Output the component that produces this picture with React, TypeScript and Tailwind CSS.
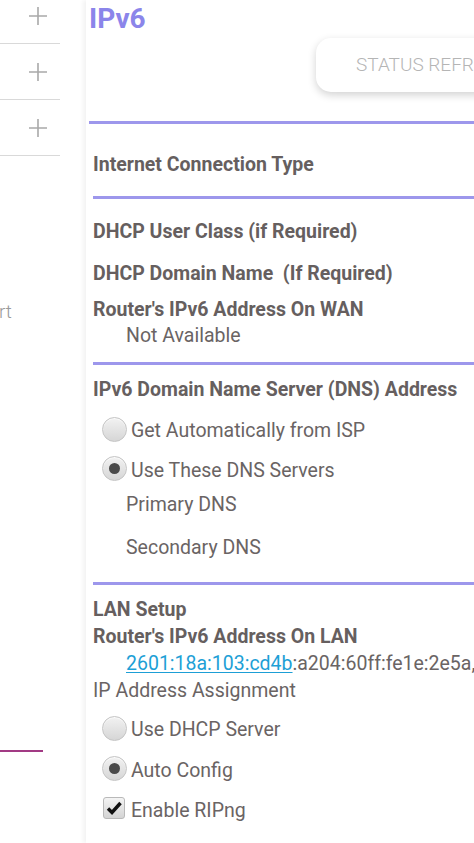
import React from 'react';

const font = { fontFamily: 'Roboto, "Liberation Sans", sans-serif' };

function PlusIcon() {
  return (
    <svg width="20" height="20" viewBox="0 0 20 20" className="text-[#a9a9a9]">
      <path d="M10 1v18M1 10h18" stroke="currentColor" strokeWidth="1.6" />
    </svg>
  );
}

function Radio({ checked }: { checked?: boolean }) {
  return (
    <span className="flex h-[25px] w-[25px] shrink-0 items-center justify-center rounded-full border border-[#c4c4c4] bg-gradient-to-b from-[#f2f2f2] to-[#d6d6d6] shadow-[inset_0_1px_1px_rgba(255,255,255,0.8)]">
      {checked && <span className="h-[11px] w-[11px] rounded-full bg-[#4a4a4a]" />}
    </span>
  );
}

function Checkbox() {
  return (
    <span className="flex h-[22px] w-[22px] shrink-0 items-center justify-center rounded-[3px] border border-[#b9b9b9] bg-gradient-to-b from-[#f4f4f4] to-[#d4d4d4]">
      <svg width="16" height="14" viewBox="0 0 16 14">
        <path d="M2 7.5l4 4L14.5 2" fill="none" stroke="#111" strokeWidth="3.4" strokeLinejoin="miter" />
      </svg>
    </span>
  );
}

function Line({ className = '' }: { className?: string }) {
  return <div className={`h-[3px] bg-[#9d97ec] ${className}`} />;
}

export default function App() {
  const bold = 'text-[19.5px] font-bold leading-[22px] text-[#665f5f] whitespace-nowrap';
  const normal = 'text-[19.5px] leading-[22px] text-[#6a6464] whitespace-nowrap';

  return (
    <div className="flex h-[843px] w-[474px] overflow-hidden bg-white" style={font}>
      {/* sidebar */}
      <div className="relative w-[60px] shrink-0">
        <div className="-mt-[12px]">
          {[0, 1, 2].map((i) => (
            <div key={i} className="flex h-[56px] items-center justify-end border-b border-[#d9d9d9] pr-[12px]">
              <PlusIcon />
            </div>
          ))}
        </div>
        <div className="mt-[145px] -ml-[1px] text-[19px] font-light leading-[22px] text-[#9a9a9a]">rt</div>
        <div className="mt-[427px] h-[2px] w-[43px] bg-[#a23a84]" />
      </div>

      <div className="w-[26px] shrink-0" />

      {/* main panel */}
      <div className="flex min-w-0 flex-1 flex-col shadow-[-3px_0_4px_rgba(0,0,0,0.05)]">
        <div className="h-[38px] pl-[3px] text-[28px] font-bold leading-[38px] text-[#8b85ea]">IPv6</div>

        <div className="flex h-[54px] justify-end">
          <div className="flex h-[54px] w-[175px] shrink-0 translate-x-[17px] items-center overflow-hidden rounded-[15px] bg-white pl-[40px] text-[19px] font-light whitespace-nowrap text-[#b5b5b5] shadow-[0_3px_8px_rgba(0,0,0,0.18)]">
            STATUS REFRESH
          </div>
        </div>

        <Line className="mt-[29px] ml-[3px]" />

        <div className="pl-[7px]">
          <div className={`mt-[30px] ${bold}`}>Internet Connection Type</div>
          <Line className="mt-[20px]" />

          <div className={`mt-[22px] ${bold}`}>DHCP User Class (if Required)</div>
          <div className={`mt-[20px] ${bold}`}>DHCP Domain Name&nbsp; (If Required)</div>
          <div className={`mt-[14px] ${bold}`}>Router's IPv6 Address On WAN</div>
          <div className={`mt-[4px] pl-[33px] ${normal}`}>Not Available</div>
          <Line className="mt-[15px]" />

          <div className={`mt-[14px] ${bold}`}>IPv6 Domain Name Server (DNS) Address</div>
          <div className="mt-[13px] flex h-[30px] items-center gap-[4px] pl-[9px]">
            <Radio />
            <span className={`mt-[3px] ${normal}`}>Get Automatically from ISP</span>
          </div>
          <div className="mt-[9px] flex h-[30px] items-center gap-[4px] pl-[9px]">
            <Radio checked />
            <span className={`mt-[5px] ${normal}`}>Use These DNS Servers</span>
          </div>
          <div className={`mt-[11px] pl-[33px] ${normal}`}>Primary DNS</div>
          <div className={`mt-[21px] pl-[33px] ${normal}`}>Secondary DNS</div>
          <Line className="mt-[23px]" />

          <div className={`mt-[14px] ${bold}`}>LAN Setup</div>
          <div className={`mt-[5px] ${bold}`}>Router's IPv6 Address On LAN</div>
          <div className={`mt-[5px] pl-[33px] ${normal}`}>
            <span className="text-[#1d9fd6] underline decoration-1 underline-offset-2">2601:18a:103:cd4b</span>
            :a204:60ff:fe1e:2e5a,
          </div>
          <div className={`mt-[5px] ${normal}`}>IP Address Assignment</div>
          <div className="mt-[11px] flex h-[30px] items-center gap-[4px] pl-[9px]">
            <Radio />
            <span className={`mt-[4px] ${normal}`}>Use DHCP Server</span>
          </div>
          <div className="mt-[10px] flex h-[30px] items-center gap-[4px] pl-[9px]">
            <Radio checked />
            <span className={`mt-[5px] ${normal}`}>Auto Config</span>
          </div>
          <div className="mt-[10px] flex h-[30px] items-center gap-[6px] pl-[10px]">
            <Checkbox />
            <span className={`mt-[5px] ${normal}`}>Enable RIPng</span>
          </div>
        </div>
      </div>
    </div>
  );
}
